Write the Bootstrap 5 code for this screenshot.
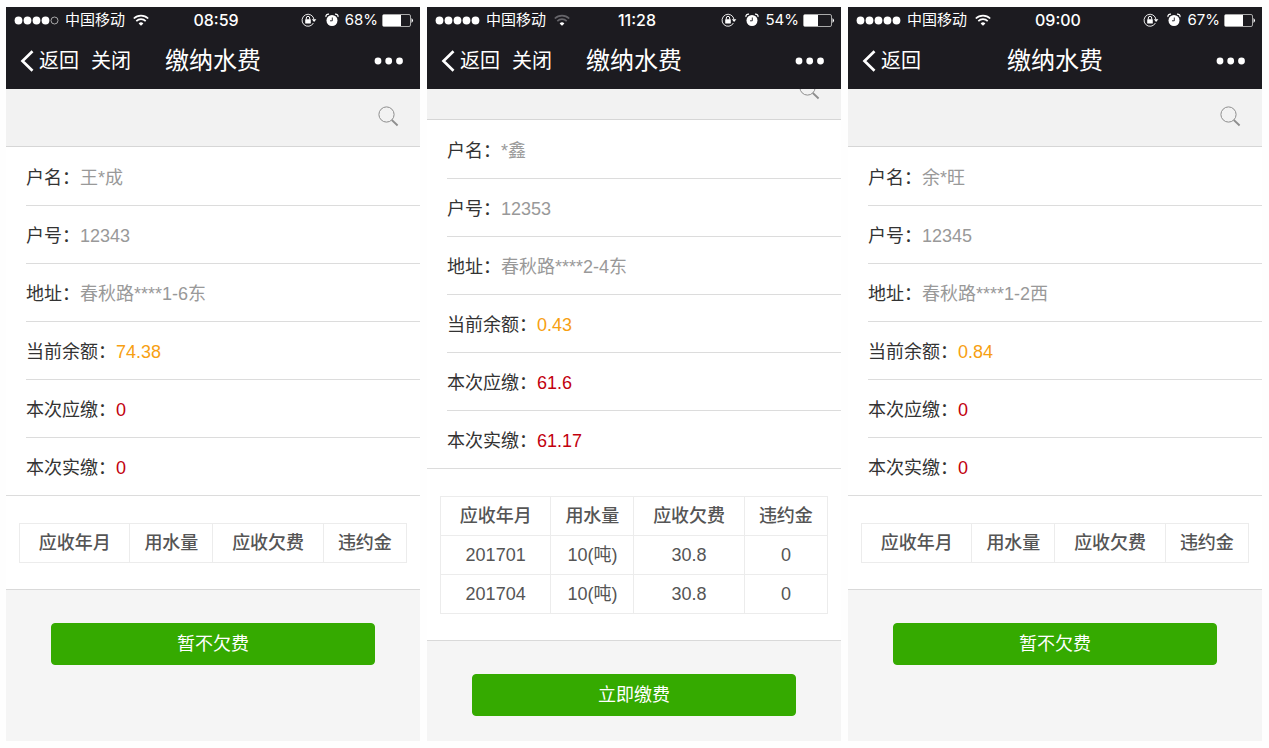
<!DOCTYPE html>
<html lang="zh-CN">
<head>
<meta charset="utf-8">
<meta name="viewport" content="width=device-width, initial-scale=1">
<title>缴纳水费</title>
<link href="https://cdn.jsdelivr.net/npm/bootstrap@5.3.0/dist/css/bootstrap.min.css" rel="stylesheet">
<style>
  body { font-family: "Liberation Sans", "Noto Sans CJK SC", sans-serif; font-size: 18px; line-height: 26px; color: #333; background: #fefefe; }
  .screens { padding: 7px 7px 7px 6px; gap: 7px; }
  .screen { flex: 1 1 0; min-width: 0; background: #f5f5f5; }
  .topbar { background: #1c1b20; color: #fff; }
  .trio { display: grid; grid-template-columns: 1fr auto 1fr; align-items: center; }
  .status { font-family: Inter, "Noto Sans CJK SC", sans-serif; font-size: 16px; height: 26px; padding: 0 6px 0 8px; }
  .status .carrier { font-size: 15px; margin: 0 8px 0 6px; }
  .status .clock { font-weight: 500; }
  .status .percent { font-size: 15px; margin: 0 4px 0 6px; }
  .titlebar { height: 56px; padding: 0 14px; font-size: 20px; }
  .titlebar h1 { font-size: 24px; line-height: 32px; font-weight: 400; }
  .titlebar a { color: #fff; text-decoration: none; }
  .back-icon { margin-right: 5px; }
  .close-link { margin-left: 12px; }
  .plain { display: flex; background: none; border: 0; padding: 0; color: inherit; }
  .more { padding-right: 2px; }
  .search { height: 58px; background: #f2f2f2; border-bottom: 1px solid #d6d6d6; color: #8e8e8e; padding: 0 21px 19px 0; }
  .search.scrolled { height: 31px; }
  .sheet { background: #fff; border-bottom: 1px solid #d9d9d9; }
  .fields { border-bottom: 1px solid #dcdcdc; padding-left: 20px; }
  .fields > div { height: 58px; padding-top: 3px; }
  .fields > div + div { border-top: 1px solid #dcdcdc; }
  .fields dt { font-weight: 400; }
  .fields dd { color: #999; }
  .fields dd.balance { color: #f7a012; }
  .fields dd.due { color: #c2000e; }
  .bills { padding: 27px 13px 26px; }
  .bills table { table-layout: fixed; }
  .bills th, .bills td { padding: 6px 0; text-align: center; border: 1px solid #ececec; color: #555; }
  .bills th { font-weight: 500; }
  .wide { width: 28.5%; }
  .thin { width: 21.5%; }
  .action { padding: 33px 45px 20px; }
  .btn-pay { --bs-btn-color: #fff; --bs-btn-bg: #35aa00; --bs-btn-hover-color: #fff; --bs-btn-hover-bg: #2f9700; --bs-btn-border-color: #35aa00; --bs-btn-border-radius: 4px; --bs-btn-font-size: 18px; height: 42px; }
</style>
</head>
<body>
<svg class="d-none" aria-hidden="true">
  <symbol id="wifi" viewBox="0 0 16 12"><path d="M8 11.8 5.6 9.4a3.5 3.5 0 0 1 4.8 0z" fill="currentColor"/></symbol>
  <symbol id="waves" viewBox="0 0 16 12"><path d="M.8 4.5a10.300 10.300 0 0 1 14.400 0M3.300 7.100a6.800 6.800 0 0 1 9.400 0" fill="none" stroke="currentColor" stroke-width="1.700"/></symbol>
  <symbol id="lock" viewBox="0 0 16 14"><path d="M12.400 10A6 6 0 1 1 13 6.500" fill="none" stroke="currentColor" stroke-width=".9"/><path d="M10.800 6.300h4.600L13.100 9z" fill="currentColor"/><rect x="4.200" y="6.200" width="5.600" height="4.200" rx=".5" fill="currentColor"/><path d="M5.300 6.500V5a1.700 1.700 0 0 1 3.400 0v1.500" fill="none" stroke="currentColor"/></symbol>
  <symbol id="alarm" viewBox="0 0 14 14"><circle cx="7" cy="7.500" r="5.500" fill="currentColor"/><path d="M1 4C.6 2.200 2 .9 4 1.100M13 4C13.400 2.200 12 .9 10 1.100" fill="none" stroke="currentColor" stroke-width="1.200"/><path d="M7.300 4.500v3.300H5" fill="none" stroke="#1c1b20" stroke-width=".9"/></symbol>
  <symbol id="chevron" viewBox="0 0 14 22"><path d="M12.500 1.200 2.500 11l10 9.800" fill="none" stroke="currentColor" stroke-width="2.700"/></symbol>
  <symbol id="more" viewBox="0 0 30 8"><circle cx="4" cy="4" r="3.400" fill="currentColor"/><circle cx="14.700" cy="4" r="3.400" fill="currentColor"/><circle cx="25.500" cy="4" r="3.400" fill="currentColor"/></symbol>
  <symbol id="magnifier" viewBox="0 0 21 21"><circle cx="8.500" cy="8.500" r="7.600" fill="none" stroke="currentColor"/><path d="m13.800 14 5.800 5.500" stroke="currentColor" stroke-width="1.800"/></symbol>
</svg>

<main class="screens d-flex min-vh-100">
  <section class="screen d-flex flex-column">
    <header class="topbar">
      <div class="status trio">
        <div class="d-flex align-items-center">
          <svg width="45" height="9" fill="#fff"><circle cx="4.500" cy="4.500" r="3.900"/><circle cx="13.500" cy="4.500" r="3.900"/><circle cx="22.500" cy="4.500" r="3.900"/><circle cx="31.500" cy="4.500" r="3.900"/><circle cx="40.500" cy="4.500" r="3.500" fill="none" stroke="#ccc" stroke-width=".8"/></svg>
          <span class="carrier">中国移动</span>
          <svg width="16" height="12"><use href="#wifi"/><use href="#waves"/></svg>
        </div>
        <span class="clock ps-1">08:59</span>
        <div class="d-flex align-items-center justify-content-end">
          <svg class="me-2" width="16" height="14"><use href="#lock"/></svg>
          <svg width="14" height="14"><use href="#alarm"/></svg>
          <span class="percent">68%</span>
          <svg width="32" height="13"><rect x=".5" y=".5" width="28" height="12" rx="1.500" fill="none" stroke="#aaa"/><rect x="1" y="1" width="18" height="11" fill="#fff"/><path d="M29.500 4q3 2.500 0 5z" fill="#fff"/></svg>
        </div>
      </div>
      <nav class="titlebar trio">
        <div class="d-flex align-items-center">
          <a href="#" class="d-flex align-items-center"><svg class="back-icon" width="14" height="22"><use href="#chevron"/></svg>返回</a>
          <a href="#" class="close-link">关闭</a>
        </div>
        <h1 class="m-0">缴纳水费</h1>
        <div class="d-flex justify-content-end"><button class="plain more" type="button" aria-label="更多"><svg width="30" height="8"><use href="#more"/></svg></button></div>
      </nav>
    </header>
    <div class="search d-flex justify-content-end align-items-end overflow-hidden">
      <button class="plain" type="button" aria-label="搜索"><svg width="21" height="21"><use href="#magnifier"/></svg></button>
    </div>
    <div class="sheet">
      <dl class="fields m-0">
        <div class="d-flex align-items-center"><dt>户名：</dt><dd class="m-0">王*成</dd></div>
        <div class="d-flex align-items-center"><dt>户号：</dt><dd class="m-0">12343</dd></div>
        <div class="d-flex align-items-center"><dt>地址：</dt><dd class="m-0">春秋路****1-6东</dd></div>
        <div class="d-flex align-items-center"><dt>当前余额：</dt><dd class="m-0 balance">74.38</dd></div>
        <div class="d-flex align-items-center"><dt>本次应缴：</dt><dd class="m-0 due">0</dd></div>
        <div class="d-flex align-items-center"><dt>本次实缴：</dt><dd class="m-0 due">0</dd></div>
      </dl>
      <div class="bills">
        <table class="w-100">
          <thead><tr><th class="wide">应收年月</th><th class="thin">用水量</th><th class="wide">应收欠费</th><th class="thin">违约金</th></tr></thead>
        </table>
      </div>
    </div>
    <div class="action"><button type="button" class="btn btn-pay w-100 py-0">暂不欠费</button></div>
  </section>

  <section class="screen d-flex flex-column">
    <header class="topbar">
      <div class="status trio">
        <div class="d-flex align-items-center">
          <svg width="45" height="9" fill="#fff"><circle cx="4.500" cy="4.500" r="3.900"/><circle cx="13.500" cy="4.500" r="3.900"/><circle cx="22.500" cy="4.500" r="3.900"/><circle cx="31.500" cy="4.500" r="3.900"/><circle cx="40.500" cy="4.500" r="3.900"/></svg>
          <span class="carrier">中国移动</span>
          <svg width="16" height="12"><use href="#wifi"/><use href="#waves" color="#66656a"/></svg>
        </div>
        <span class="clock ps-1">11:28</span>
        <div class="d-flex align-items-center justify-content-end">
          <svg class="me-2" width="16" height="14"><use href="#lock"/></svg>
          <svg width="14" height="14"><use href="#alarm"/></svg>
          <span class="percent">54%</span>
          <svg width="32" height="13"><rect x=".5" y=".5" width="28" height="12" rx="1.500" fill="none" stroke="#aaa"/><rect x="1" y="1" width="14" height="11" fill="#fff"/><path d="M29.500 4q3 2.500 0 5z" fill="#fff"/></svg>
        </div>
      </div>
      <nav class="titlebar trio">
        <div class="d-flex align-items-center">
          <a href="#" class="d-flex align-items-center"><svg class="back-icon" width="14" height="22"><use href="#chevron"/></svg>返回</a>
          <a href="#" class="close-link">关闭</a>
        </div>
        <h1 class="m-0">缴纳水费</h1>
        <div class="d-flex justify-content-end"><button class="plain more" type="button" aria-label="更多"><svg width="30" height="8"><use href="#more"/></svg></button></div>
      </nav>
    </header>
    <div class="search scrolled d-flex justify-content-end align-items-end overflow-hidden">
      <button class="plain" type="button" aria-label="搜索"><svg width="21" height="21"><use href="#magnifier"/></svg></button>
    </div>
    <div class="sheet">
      <dl class="fields m-0">
        <div class="d-flex align-items-center"><dt>户名：</dt><dd class="m-0">*鑫</dd></div>
        <div class="d-flex align-items-center"><dt>户号：</dt><dd class="m-0">12353</dd></div>
        <div class="d-flex align-items-center"><dt>地址：</dt><dd class="m-0">春秋路****2-4东</dd></div>
        <div class="d-flex align-items-center"><dt>当前余额：</dt><dd class="m-0 balance">0.43</dd></div>
        <div class="d-flex align-items-center"><dt>本次应缴：</dt><dd class="m-0 due">61.6</dd></div>
        <div class="d-flex align-items-center"><dt>本次实缴：</dt><dd class="m-0 due">61.17</dd></div>
      </dl>
      <div class="bills">
        <table class="w-100">
          <thead><tr><th class="wide">应收年月</th><th class="thin">用水量</th><th class="wide">应收欠费</th><th class="thin">违约金</th></tr></thead>
          <tbody>
            <tr><td>201701</td><td>10(吨)</td><td>30.8</td><td>0</td></tr>
            <tr><td>201704</td><td>10(吨)</td><td>30.8</td><td>0</td></tr>
          </tbody>
        </table>
      </div>
    </div>
    <div class="action"><button type="button" class="btn btn-pay w-100 py-0">立即缴费</button></div>
  </section>

  <section class="screen d-flex flex-column">
    <header class="topbar">
      <div class="status trio">
        <div class="d-flex align-items-center">
          <svg width="45" height="9" fill="#fff"><circle cx="4.500" cy="4.500" r="3.900"/><circle cx="13.500" cy="4.500" r="3.900"/><circle cx="22.500" cy="4.500" r="3.900"/><circle cx="31.500" cy="4.500" r="3.900"/><circle cx="40.500" cy="4.500" r="3.900"/></svg>
          <span class="carrier">中国移动</span>
          <svg width="16" height="12"><use href="#wifi"/><use href="#waves"/></svg>
        </div>
        <span class="clock ps-1">09:00</span>
        <div class="d-flex align-items-center justify-content-end">
          <svg class="me-2" width="16" height="14"><use href="#lock"/></svg>
          <svg width="14" height="14"><use href="#alarm"/></svg>
          <span class="percent">67%</span>
          <svg width="32" height="13"><rect x=".5" y=".5" width="28" height="12" rx="1.500" fill="none" stroke="#aaa"/><rect x="1" y="1" width="18" height="11" fill="#fff"/><path d="M29.500 4q3 2.500 0 5z" fill="#fff"/></svg>
        </div>
      </div>
      <nav class="titlebar trio">
        <div class="d-flex align-items-center">
          <a href="#" class="d-flex align-items-center"><svg class="back-icon" width="14" height="22"><use href="#chevron"/></svg>返回</a>
        </div>
        <h1 class="m-0">缴纳水费</h1>
        <div class="d-flex justify-content-end"><button class="plain more" type="button" aria-label="更多"><svg width="30" height="8"><use href="#more"/></svg></button></div>
      </nav>
    </header>
    <div class="search d-flex justify-content-end align-items-end overflow-hidden">
      <button class="plain" type="button" aria-label="搜索"><svg width="21" height="21"><use href="#magnifier"/></svg></button>
    </div>
    <div class="sheet">
      <dl class="fields m-0">
        <div class="d-flex align-items-center"><dt>户名：</dt><dd class="m-0">余*旺</dd></div>
        <div class="d-flex align-items-center"><dt>户号：</dt><dd class="m-0">12345</dd></div>
        <div class="d-flex align-items-center"><dt>地址：</dt><dd class="m-0">春秋路****1-2西</dd></div>
        <div class="d-flex align-items-center"><dt>当前余额：</dt><dd class="m-0 balance">0.84</dd></div>
        <div class="d-flex align-items-center"><dt>本次应缴：</dt><dd class="m-0 due">0</dd></div>
        <div class="d-flex align-items-center"><dt>本次实缴：</dt><dd class="m-0 due">0</dd></div>
      </dl>
      <div class="bills">
        <table class="w-100">
          <thead><tr><th class="wide">应收年月</th><th class="thin">用水量</th><th class="wide">应收欠费</th><th class="thin">违约金</th></tr></thead>
        </table>
      </div>
    </div>
    <div class="action"><button type="button" class="btn btn-pay w-100 py-0">暂不欠费</button></div>
  </section>
</main>
<script src="https://cdn.jsdelivr.net/npm/bootstrap@5.3.0/dist/js/bootstrap.bundle.min.js"></script>
</body>
</html>
